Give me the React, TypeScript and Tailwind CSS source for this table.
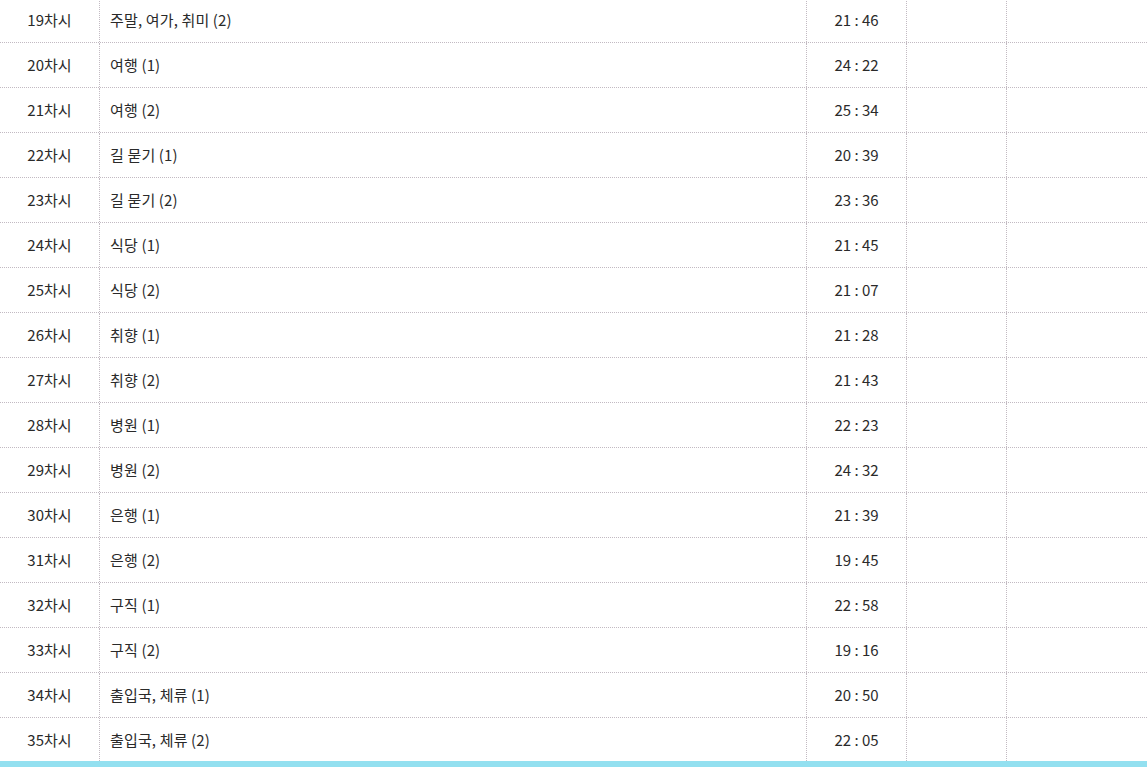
import React from "react";

interface Lesson {
  no: number;
  title: string;
  time: string;
}

const LESSONS: Lesson[] = [
  { no: 19, title: "주말, 여가, 취미 (2)", time: "21 : 46" },
  { no: 20, title: "여행 (1)", time: "24 : 22" },
  { no: 21, title: "여행 (2)", time: "25 : 34" },
  { no: 22, title: "길 묻기 (1)", time: "20 : 39" },
  { no: 23, title: "길 묻기 (2)", time: "23 : 36" },
  { no: 24, title: "식당 (1)", time: "21 : 45" },
  { no: 25, title: "식당 (2)", time: "21 : 07" },
  { no: 26, title: "취향 (1)", time: "21 : 28" },
  { no: 27, title: "취향 (2)", time: "21 : 43" },
  { no: 28, title: "병원 (1)", time: "22 : 23" },
  { no: 29, title: "병원 (2)", time: "24 : 32" },
  { no: 30, title: "은행 (1)", time: "21 : 39" },
  { no: 31, title: "은행 (2)", time: "19 : 45" },
  { no: 32, title: "구직 (1)", time: "22 : 58" },
  { no: 33, title: "구직 (2)", time: "19 : 16" },
  { no: 34, title: "출입국, 체류 (1)", time: "20 : 50" },
  { no: 35, title: "출입국, 체류 (2)", time: "22 : 05" },
];

// 점선 테두리 색 (회색 + 연보라 섞인 톤)
const LINE = "border-[#c2bac2]";

export default function App() {
  return (
    <div className="w-[1147px] h-[767px] overflow-hidden bg-white font-['Noto_Sans_CJK_KR','Noto_Sans',sans-serif] text-[15px] text-[#2a2a2a]">
      <div className="-mt-[2px]">
        {LESSONS.map((row, idx) => {
          const last = idx === LESSONS.length - 1;
          return (
            <div
              key={row.no}
              className={`flex items-center ${last ? "h-[43px]" : `h-[45px] border-b border-dotted ${LINE}`}`}
            >
              <div className={`w-[100px] h-full pt-[1px] flex items-center justify-center border-r border-dotted ${LINE}`}>
                {row.no}차시
              </div>
              <div className={`w-[707px] h-full pt-[1px] flex items-center pl-[10px] border-r border-dotted ${LINE}`}>
                <span className="tracking-[0.15px]">{row.title}</span>
              </div>
              <div className={`w-[100px] h-full pt-[1px] flex items-center justify-center border-r border-dotted ${LINE}`}>
                <span className="whitespace-pre">{row.time}</span>
              </div>
              <div className={`w-[100px] h-full border-r border-dotted ${LINE}`}></div>
              <div className="flex-1 h-full"></div>
            </div>
          );
        })}
        <div className="h-[8px] bg-[#93e0f0]"></div>
      </div>
    </div>
  );
}
